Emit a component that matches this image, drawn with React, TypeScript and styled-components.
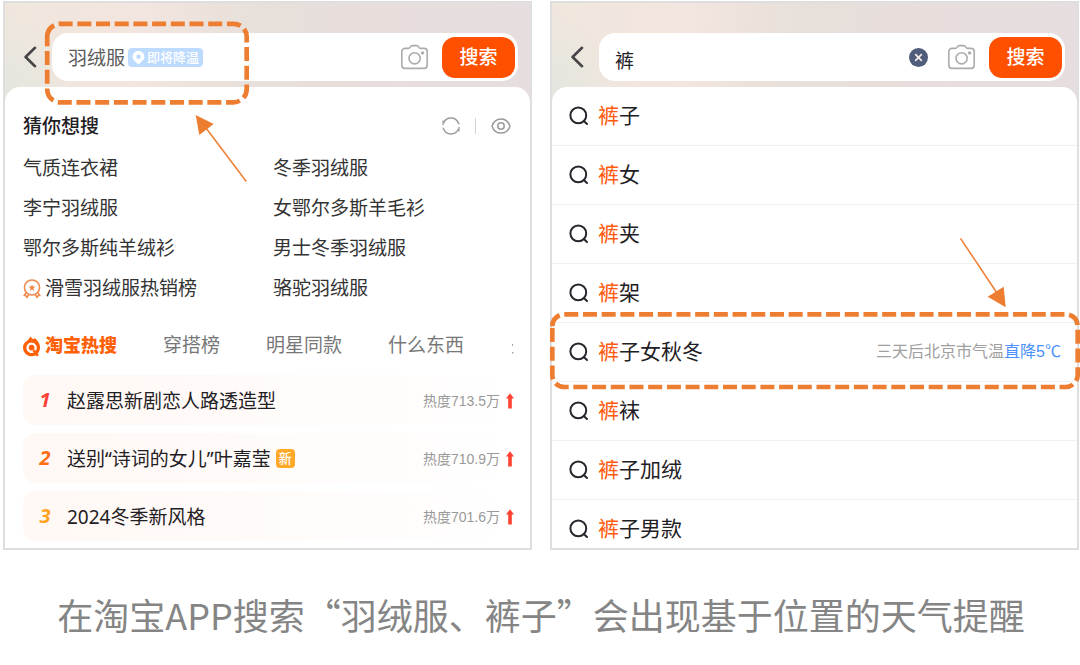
import React from "react";
import styled, { createGlobalStyle } from "styled-components";

const GlobalStyle = createGlobalStyle`
  *, *::before, *::after { box-sizing: border-box; }
  body {
    margin: 0;
    background: #ffffff;
    color: #1f2024;
    font-family: "Liberation Sans", "Noto Sans CJK SC", sans-serif;
  }
  button, input { font: inherit; color: inherit; border: 0; background: none; padding: 0; margin: 0; }
  button { cursor: pointer; }
  a { color: inherit; text-decoration: none; }
  ul, ol { list-style: none; margin: 0; padding: 0; }
  svg { display: block; flex: none; }
`;

const Figure = styled.figure`
  margin: 0;
  padding: 1px 1px 0 3px;
`;

const Screens = styled.div`
  display: grid;
  grid-template-columns: minmax(0, 1fr) minmax(0, 1fr);
  gap: 18px;
`;

const ScreenWrap = styled.section`
  position: relative;
  display: flex;
`;

const Screen = styled.div`
  flex: 1;
  min-width: 0;
  display: flex;
  flex-direction: column;
  overflow: hidden;
  border: 2px solid #dededf;
  background:
    radial-gradient(circle at 0 84px, #e4e6df 0, rgba(228, 230, 223, 0) 70px) no-repeat,
    linear-gradient(95deg, #efe7dd 0%, #f3e5df 24%, #e8e0da 42%, #e7dedc 60%, #e6dddf 100%);
`;

const SearchHeader = styled.form`
  display: flex;
  align-items: center;
  padding: 30px 12px 6px 18px;
`;

const BackButton = styled.button`
  width: 29px;
  height: 48px;
  display: flex;
  align-items: center;
`;

const SearchBar = styled.div`
  flex: 1;
  min-width: 0;
  height: 48px;
  display: flex;
  align-items: center;
  padding: 0 3px 0 16px;
  border-radius: 16px;
  background: #ffffff;
`;

const SearchInput = styled.input<{ $fill?: boolean }>`
  ${(p) => (p.$fill ? "flex: 1; min-width: 0;" : "width: 57px;")}
  height: 32px;
  padding-top: 4px;
  font-size: 19px;
  line-height: 28px;
  outline: none;
  &::placeholder { color: #5c5c5c; opacity: 1; }
`;

const WeatherBadge = styled.span`
  display: inline-flex;
  align-items: center;
  gap: 2px;
  height: 19px;
  margin-left: 3px;
  padding: 0 4px;
  border-radius: 4px;
  background: #bddaff;
  color: #ffffff;
  font-size: 13px;
  font-weight: 500;
  line-height: 19px;
  white-space: nowrap;
`;

const BarTools = styled.div`
  display: flex;
  align-items: center;
  gap: 20px;
  margin-left: auto;
  margin-right: 14px;
`;

const IconButton = styled.button`
  display: flex;
  align-items: center;
  justify-content: center;
`;

const SubmitButton = styled.button`
  width: 73px;
  height: 41px;
  padding-top: 2px;
  border-radius: 13px;
  background: #ff5000;
  color: #ffffff;
  font-size: 19px;
  font-weight: 500;
  line-height: 28px;
`;

const Sheet = styled.div<{ $padded?: boolean }>`
  flex: 1;
  border-radius: 15px 15px 0 0;
  background: #ffffff;
  padding: ${(p) => (p.$padded ? "20px 16px 7px 18px" : "0")};
`;

const SectionHead = styled.div`
  display: flex;
  align-items: center;
  justify-content: space-between;
  height: 38px;
  margin-bottom: 3px;
`;

const SectionTitle = styled.h2`
  margin: 0;
  padding-top: 2px;
  font-size: 19px;
  font-weight: 500;
  line-height: 28px;
`;

const HeadTools = styled.div`
  display: flex;
  align-items: center;
  gap: 15px;
  padding-right: 3px;
`;

const Divider = styled.span`
  width: 1px;
  height: 16px;
  background: #d4d4d4;
`;

const GuessGrid = styled.ul`
  display: grid;
  grid-template-columns: 1fr 1fr;
  column-gap: 9px;
`;

const GuessLink = styled.a`
  display: flex;
  align-items: center;
  gap: 4px;
  height: 40px;
  padding-top: 2px;
  color: #333333;
  font-size: 19px;
  line-height: 28px;
  white-space: nowrap;
`;

const Tabs = styled.nav`
  display: flex;
  align-items: center;
  gap: 46px;
  height: 40px;
  margin: 17px 0 10px;
  padding-top: 2px;
`;

const Tab = styled.button<{ $active?: boolean }>`
  display: flex;
  align-items: center;
  gap: 5px;
  color: ${(p) => (p.$active ? "#ff5f05" : "#777777")};
  font-size: ${(p) => (p.$active ? 18 : 19)}px;
  font-weight: ${(p) => (p.$active ? 900 : 400)};
  line-height: 28px;
  white-space: nowrap;
`;

const TabEdge = styled.span`
  margin-left: auto;
`;

const HotList = styled.ol`
  display: grid;
  gap: 8px;
`;

const HotLink = styled.a`
  display: flex;
  align-items: center;
  height: 50px;
  border-radius: 13px;
  background: linear-gradient(90deg, #fff8f5 0%, #fffbf9 50%, #ffffff 100%);
`;

const Rank = styled.span<{ $color: string }>`
  width: 44px;
  text-align: center;
  color: ${(p) => p.$color};
  font-family: "Noto Sans", sans-serif;
  font-size: 20px;
  font-style: italic;
  font-weight: 700;
  line-height: 28px;
`;

const HotTitle = styled.span`
  padding-top: 2px;
  font-family: "Noto Sans", "Noto Sans CJK SC", sans-serif;
  font-size: 19px;
  line-height: 28px;
  white-space: nowrap;
`;

const NewBadge = styled.span`
  width: 19px;
  height: 19px;
  margin-left: 5px;
  border-radius: 4px;
  background: #ffa928;
  color: #ffffff;
  font-size: 13px;
  font-weight: 500;
  line-height: 19px;
  text-align: center;
`;

const Heat = styled.span`
  display: flex;
  align-items: center;
  gap: 6px;
  margin-left: auto;
  padding-top: 2px;
  color: #999999;
  font-size: 14px;
  line-height: 20px;
  white-space: nowrap;
`;

const SuggestItem = styled.li`
  border-bottom: 1px solid #f0f0f0;
  &:last-child { border-bottom: 0; margin-bottom: -11px; }
`;

const SuggestLink = styled.a`
  display: flex;
  align-items: center;
  gap: 9px;
  height: 58px;
  padding: 0 16px 0 17px;
`;

const SuggestText = styled.span`
  font-size: 21px;
  line-height: 30px;
  white-space: nowrap;
`;

const Match = styled.em`
  font-style: normal;
  color: #ff5a0d;
`;

const WeatherNote = styled.span`
  margin-left: auto;
  color: #a0a0a0;
  font-size: 16px;
  line-height: 24px;
  white-space: nowrap;
`;

const WeatherDrop = styled.span`
  color: #4a90ff;
`;

const Annotation = styled.svg`
  position: absolute;
  top: -1px;
  left: -3px;
  overflow: visible;
  pointer-events: none;
`;

const Caption = styled.figcaption`
  margin-top: 37px;
  padding-bottom: 20px;
  color: #858585;
  font-family: "Noto Sans CJK SC", sans-serif;
  font-size: 36px;
  line-height: 54px;
  text-align: center;
`;

const BackIcon = () => (
  <svg width="14" height="22" viewBox="0 0 14 22" fill="none" stroke="#454545" strokeWidth="2.6" strokeLinecap="round" strokeLinejoin="round">
    <path d="M12 1.8 2.6 11 12 20.2" />
  </svg>
);

const PinIcon = () => (
  <svg width="13" height="15" viewBox="0 0 13 15">
    <path fillRule="evenodd" fill="#fff" d="M6.500.8a5.900 5.900 0 0 1 5.900 5.900c0 3.100-2.900 5.100-5.900 7.700C3.500 11.800.6 9.800.6 6.700A5.900 5.900 0 0 1 6.500.8Zm0 3.700a2.200 2.200 0 1 0 0 4.400 2.200 2.200 0 0 0 0-4.400Z" />
  </svg>
);

const CameraIcon = () => (
  <svg width="27" height="26" viewBox="0 0 27 26" fill="none" stroke="#acacac" strokeWidth="1.6" strokeLinejoin="round">
    <path d="M4 4.400h3.400c1 0 1.300-.5 1.800-1.300.6-1 1.200-1.500 2.200-1.500h4.200c1 0 1.600.5 2.200 1.500.5.8.8 1.300 1.800 1.300H23A3.200 3.200 0 0 1 26.200 7.600v13.600A3.200 3.200 0 0 1 23 24.400H4A3.200 3.200 0 0 1 .8 21.200V7.600A3.200 3.200 0 0 1 4 4.400Z" />
    <circle cx="13.600" cy="14.300" r="5.600" />
    <circle cx="21.600" cy="8.900" r="1.700" fill="#acacac" stroke="none" />
  </svg>
);

const ClearIcon = () => (
  <svg width="19" height="19" viewBox="0 0 19 19">
    <circle cx="9.500" cy="9.500" r="9.500" fill="#4f5d7b" />
    <path d="m6.200 6.200 6.600 6.600m0-6.600-6.600 6.600" stroke="#f4eee8" strokeWidth="1.700" />
  </svg>
);

const RefreshIcon = () => (
  <svg width="18" height="18" viewBox="0 0 18 18" fill="none" stroke="#9b9b9b" strokeWidth="1.500">
    <path d="M1.500 6.200A8 8 0 0 1 16.500 6.200" />
    <path d="M16.500 11.800A8 8 0 0 1 1.500 11.800" />
    <path d="M1 3.400v4h.8M17 14.600v-4h-.8M16.400 5.400l.6 2M1.600 12.600l-.6-2" strokeWidth="1.200" />
  </svg>
);

const EyeIcon = () => (
  <svg width="20" height="16" viewBox="0 0 20 16" fill="none" stroke="#9b9b9b" strokeWidth="1.500">
    <path d="M1 8C2.400 3.600 5.600.9 10 .9S17.600 3.600 19 8c-1.400 4.400-4.600 7.100-9 7.100S2.400 12.400 1 8Z" />
    <circle cx="10" cy="8" r="3.200" />
  </svg>
);

const MedalIcon = () => (
  <svg width="18" height="20" viewBox="0 0 18 20" fill="none" stroke="#f08a4b" strokeWidth="1.500" strokeLinejoin="round">
    <circle cx="9" cy="8.500" r="7.600" />
    <path d="M3 14 1 16.600l2-.1.800 2.100 2-2.800M15 14l2 2.600-2-.1-.8 2.100-2-2.800" />
    <path fill="#f08a4b" stroke="none" d="m9 5.200 1 2.200 2.400.3-1.800 1.600.5 2.400L9 10.500l-2.100 1.200.5-2.400-1.800-1.600L8 7.400Z" />
  </svg>
);

const FlameIcon = () => (
  <svg width="17" height="21" viewBox="0 0 17 21" fill="none">
    <path
      fill="#ff5f05"
      fillRule="evenodd"
      d="M7.300.3c.7 1.700 2 2.500 3.700 2.900 0-.5.100-.9.300-1.300C14.500 4 17 7.200 17 11.400c0 2.600-.9 4.700-2.400 6.300l1.300 1.400-1.900 1.300-1.700-1.100A8.500 8.500 0 0 1 0 11.600C0 8.600 1.200 6.800 3.200 5.500 5 4.300 6.500 2.800 7.300.3ZM8.500 6.500a5.200 5.200 0 1 0 2.300 9.900l-1.500-1.500 2-1.400 1.500 1.200a5.200 5.200 0 0 0-4.300-8.200Z"
    />
    <circle cx="8.600" cy="11.600" r="2.900" fill="#ff5f05" />
  </svg>
);

const TabEdgeIcon = () => (
  <svg width="2" height="16" viewBox="0 0 2 16" fill="#a6a6a6">
    <path d="M0 6h1v2H0zM0 14h1.500v1.500H0z" />
  </svg>
);

const RiseIcon = () => (
  <svg width="8" height="16" viewBox="0 0 8 16">
    <path fill="#ff4231" d="M4 .2 8 5.600H5.800V15.400H2.200V5.600H0Z" />
  </svg>
);

const SearchIcon = () => (
  <svg width="20" height="20" viewBox="0 0 20 20" fill="none" stroke="#26272c" strokeWidth="2" strokeLinecap="round">
    <circle cx="9.300" cy="9.400" r="7.900" />
    <path d="m14.800 15 3.200 3" />
  </svg>
);

const guesses = [
  "气质连衣裙", "冬季羽绒服",
  "李宁羽绒服", "女鄂尔多斯羊毛衫",
  "鄂尔多斯纯羊绒衫", "男士冬季羽绒服",
  "滑雪羽绒服热销榜", "骆驼羽绒服",
];

const hotItems = [
  { title: "赵露思新剧恋人路透造型", heat: "热度713.5万", color: "#ff4238", isNew: false },
  { title: "送别“诗词的女儿”叶嘉莹", heat: "热度710.9万", color: "#ff6d16", isNew: true },
  { title: "2024冬季新风格", heat: "热度701.6万", color: "#ffa31f", isNew: false },
];

const suggestions = ["子", "女", "夹", "架", "子女秋冬", "袜", "子加绒", "子男款"];

const stop = (e: React.FormEvent) => e.preventDefault();

export default function App() {
  return (
    <>
      <GlobalStyle />
      <Figure>
        <Screens>
          <ScreenWrap>
            <Screen>
              <SearchHeader onSubmit={stop}>
                <BackButton type="button" aria-label="返回"><BackIcon /></BackButton>
                <SearchBar>
                  <SearchInput type="text" aria-label="搜索商品" placeholder="羽绒服" />
                  <WeatherBadge><PinIcon />即将降温</WeatherBadge>
                  <BarTools>
                    <IconButton type="button" aria-label="拍照搜索"><CameraIcon /></IconButton>
                  </BarTools>
                  <SubmitButton type="submit">搜索</SubmitButton>
                </SearchBar>
              </SearchHeader>
              <Sheet $padded>
                <SectionHead>
                  <SectionTitle>猜你想搜</SectionTitle>
                  <HeadTools>
                    <IconButton type="button" aria-label="换一批"><RefreshIcon /></IconButton>
                    <Divider />
                    <IconButton type="button" aria-label="隐藏"><EyeIcon /></IconButton>
                  </HeadTools>
                </SectionHead>
                <GuessGrid>
                  {guesses.map((text) => (
                    <li key={text}>
                      <GuessLink href="#">
                        {text.endsWith("热销榜") && <MedalIcon />}
                        {text}
                      </GuessLink>
                    </li>
                  ))}
                </GuessGrid>
                <Tabs>
                  <Tab type="button" $active><FlameIcon />淘宝热搜</Tab>
                  <Tab type="button">穿搭榜</Tab>
                  <Tab type="button">明星同款</Tab>
                  <Tab type="button">什么东西</Tab>
                  <TabEdge aria-hidden="true"><TabEdgeIcon /></TabEdge>
                </Tabs>
                <HotList>
                  {hotItems.map((item, i) => (
                    <li key={item.title}>
                      <HotLink href="#">
                        <Rank $color={item.color}>{i + 1}</Rank>
                        <HotTitle>{item.title}</HotTitle>
                        {item.isNew && <NewBadge>新</NewBadge>}
                        <Heat>{item.heat}<RiseIcon /></Heat>
                      </HotLink>
                    </li>
                  ))}
                </HotList>
              </Sheet>
            </Screen>
            <Annotation width="532" height="550" viewBox="0 0 532 550" aria-hidden="true">
              <path
                d="M47.200 36.800A13 13 0 0 1 60.200 23.800H233.700A13 13 0 0 1 246.700 36.800V89.300A13 13 0 0 1 233.700 102.300H60.200A13 13 0 0 1 47.200 89.300Z"
                fill="none" stroke="#ed7d31" strokeWidth="4.700" strokeDasharray="14 4.700"
              />
              <path d="M246.300 181.500 206 128" stroke="#ed7d31" strokeWidth="1.500" />
              <path d="M195.700 115 213.700 124 199.300 135Z" fill="#ed7d31" />
            </Annotation>
          </ScreenWrap>

          <ScreenWrap>
            <Screen>
              <SearchHeader onSubmit={stop}>
                <BackButton type="button" aria-label="返回"><BackIcon /></BackButton>
                <SearchBar>
                  <SearchInput $fill type="text" aria-label="搜索商品" defaultValue="裤" />
                  <BarTools>
                    <IconButton type="button" aria-label="清除"><ClearIcon /></IconButton>
                    <IconButton type="button" aria-label="拍照搜索"><CameraIcon /></IconButton>
                  </BarTools>
                  <SubmitButton type="submit">搜索</SubmitButton>
                </SearchBar>
              </SearchHeader>
              <Sheet>
                <ul>
                  {suggestions.map((rest) => (
                    <SuggestItem key={rest}>
                      <SuggestLink href="#">
                        <SearchIcon />
                        <SuggestText><Match>裤</Match>{rest}</SuggestText>
                        {rest === "子女秋冬" && (
                          <WeatherNote>三天后北京市气温<WeatherDrop>直降5℃</WeatherDrop></WeatherNote>
                        )}
                      </SuggestLink>
                    </SuggestItem>
                  ))}
                </ul>
              </Sheet>
            </Screen>
            <Annotation width="532" height="550" viewBox="547 0 532 550" aria-hidden="true">
              <path
                d="M552.300 326.300A12 12 0 0 1 564.300 314.300H1065.700A12 12 0 0 1 1077.700 326.300V375A12 12 0 0 1 1065.700 387H564.300A12 12 0 0 1 552.300 375Z"
                fill="none" stroke="#ed7d31" strokeWidth="4.700" strokeDasharray="14 4.700"
              />
              <path d="M960.500 238.300 997 293" stroke="#ed7d31" strokeWidth="1.500" />
              <path d="M1005.700 307.300 1003.700 286.700 987.700 296.700Z" fill="#ed7d31" />
            </Annotation>
          </ScreenWrap>
        </Screens>
        <Caption>在淘宝APP搜索“羽绒服、裤子”会出现基于位置的天气提醒</Caption>
      </Figure>
    </>
  );
}
